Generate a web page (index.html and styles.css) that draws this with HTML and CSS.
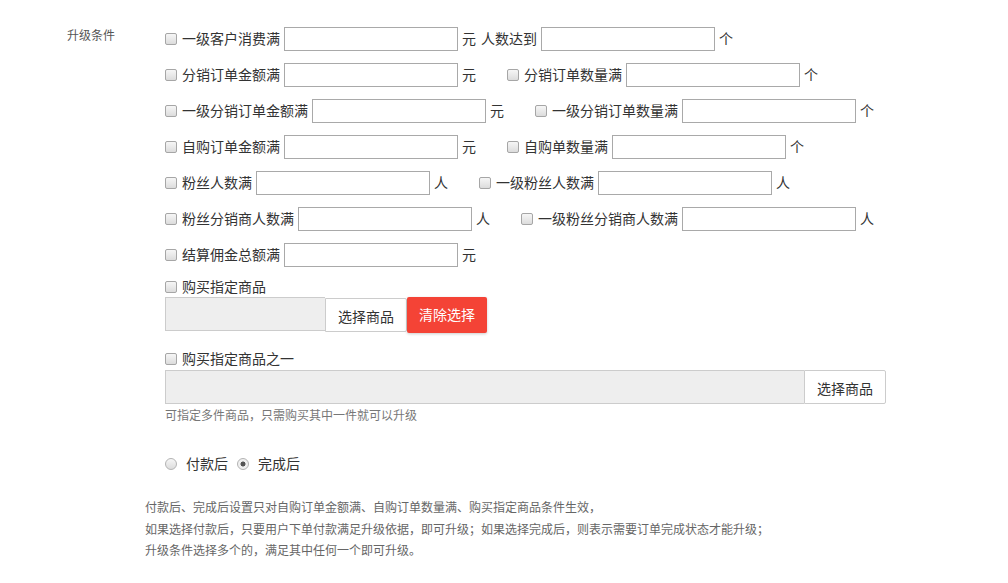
FILE: index.html
```html
<!DOCTYPE html>
<html lang="zh-CN">
<head>
<meta charset="utf-8">
<title>升级条件</title>
<link rel="stylesheet" href="styles.css">
</head>
<body>
<div class="page">
  <div class="group">
    <div class="group-label">升级条件</div>
    <div class="group-body">
      <div class="row">
        <label class="field tight"><input type="checkbox" class="cb"><span>一级客户消费满</span><input type="text" class="txt"><span>元</span></label>
        <span class="plain">人数达到</span><input type="text" class="txt"><span class="unit-last">个</span>
      </div>
      <div class="row">
        <label class="field"><input type="checkbox" class="cb"><span>分销订单金额满</span><input type="text" class="txt"><span>元</span></label>
        <label class="field"><input type="checkbox" class="cb"><span>分销订单数量满</span><input type="text" class="txt"><span>个</span></label>
      </div>
      <div class="row">
        <label class="field"><input type="checkbox" class="cb"><span>一级分销订单金额满</span><input type="text" class="txt"><span>元</span></label>
        <label class="field"><input type="checkbox" class="cb"><span>一级分销订单数量满</span><input type="text" class="txt"><span>个</span></label>
      </div>
      <div class="row">
        <label class="field"><input type="checkbox" class="cb"><span>自购订单金额满</span><input type="text" class="txt"><span>元</span></label>
        <label class="field"><input type="checkbox" class="cb"><span>自购单数量满</span><input type="text" class="txt"><span>个</span></label>
      </div>
      <div class="row">
        <label class="field"><input type="checkbox" class="cb"><span>粉丝人数满</span><input type="text" class="txt"><span>人</span></label>
        <label class="field"><input type="checkbox" class="cb"><span>一级粉丝人数满</span><input type="text" class="txt"><span>人</span></label>
      </div>
      <div class="row">
        <label class="field"><input type="checkbox" class="cb"><span>粉丝分销商人数满</span><input type="text" class="txt"><span>人</span></label>
        <label class="field"><input type="checkbox" class="cb"><span>一级粉丝分销商人数满</span><input type="text" class="txt"><span>人</span></label>
      </div>
      <div class="row">
        <label class="field"><input type="checkbox" class="cb"><span>结算佣金总额满</span><input type="text" class="txt"><span>元</span></label>
      </div>

      <label class="check-row"><input type="checkbox" class="cb"><span>购买指定商品</span></label>
      <div class="pick">
        <div class="pick-box short"></div>
        <button class="btn-white">选择商品</button>
        <button class="btn-red">清除选择</button>
      </div>

      <label class="check-row second"><input type="checkbox" class="cb"><span>购买指定商品之一</span></label>
      <div class="pick wide">
        <div class="pick-box long"></div>
        <button class="btn-white tall">选择商品</button>
      </div>
      <div class="hint">可指定多件商品，只需购买其中一件就可以升级</div>

      <div class="radio-row">
        <label class="radio-item"><input type="radio" name="when" class="rd"><span>付款后</span></label>
        <label class="radio-item"><input type="radio" name="when" class="rd" checked><span>完成后</span></label>
      </div>
    </div>
  </div>
  <div class="notes">
    <p>付款后、完成后设置只对自购订单金额满、自购订单数量满、购买指定商品条件生效，</p>
    <p>如果选择付款后，只要用户下单付款满足升级依据，即可升级；如果选择完成后，则表示需要订单完成状态才能升级；</p>
    <p>升级条件选择多个的，满足其中任何一个即可升级。</p>
  </div>
</div>
</body>
</html>
```
FILE: styles.css
```css
* { box-sizing: border-box; }
html, body { margin: 0; padding: 0; background: #fff; }
body {
  font-family: "Noto Sans CJK SC", "Microsoft YaHei", sans-serif;
  font-size: 14px;
  color: #333;
}
.page { padding-top: 21px; }
.group { display: flex; padding-left: 67px; }
.group-label {
  width: 98px;
  flex: none;
  font-size: 12px;
  line-height: 28px;
  color: #555;
}
.group-body { display: flex; flex-direction: column; flex: none; }
.row {
  display: flex;
  align-items: center;
  height: 36px;
  white-space: nowrap;
}
.row span, .check-row span, .radio-item span { padding-bottom: 2px; flex: none; }
.field {
  display: flex;
  align-items: center;
  gap: 4px;
  margin-right: 31px;
  flex: none;
}
.field.tight { margin-right: 5px; }
.field > .cb { margin-right: 1px; }
.plain { margin-right: 4px; }
.unit-last { margin-left: 4px; }
.txt {
  width: 174px;
  height: 24px;
  flex: none;
  border: 1px solid #a9a9a9;
  margin: 0;
  padding: 0 4px;
  background: #fff;
  font: inherit;
}
.cb {
  appearance: none;
  -webkit-appearance: none;
  width: 12px;
  height: 12px;
  margin: 0;
  border: 1px solid #a6a6a6;
  border-radius: 2px;
  background: linear-gradient(#f6f6f6, #dcdcdc);
  flex: none;
}
.check-row {
  display: flex;
  align-items: center;
  gap: 5px;
  height: 24px;
  padding-top: 4px;
}
.check-row.second { margin-top: 12px; }
.pick { display: flex; align-items: flex-start; }
.pick.wide { margin-top: 1px; }
.pick-box {
  background: #eee;
  border: 1px solid #ccc;
  border-right: none;
  height: 34px;
  flex: none;
}
.pick-box.short { width: 160px; }
.pick-box.long { width: 639px; }
.btn-white {
  width: 82px;
  height: 34px;
  flex: none;
  margin: 1px 0 0 0;
  padding: 2px 0 0 0;
  border: 1px solid #ccc;
  background: #fff;
  color: #333;
  font: inherit;
  border-radius: 0 2px 2px 0;
}
.btn-white.tall { margin-top: 0; }
.btn-red {
  width: 80px;
  height: 36px;
  flex: none;
  margin: 0;
  padding: 0 0 2px 0;
  border: none;
  border-radius: 2px;
  background: #f44336;
  color: #fff;
  font: inherit;
  box-shadow: 0 1px 3px rgba(0,0,0,0.2);
}
.hint {
  font-size: 12px;
  line-height: 20px;
  color: #777;
  margin-top: 1px;
}
.radio-row {
  display: flex;
  align-items: center;
  height: 24px;
  margin-top: 27px;
  gap: 9px;
}
.radio-item { display: flex; align-items: center; gap: 9px; }
.rd {
  appearance: none;
  -webkit-appearance: none;
  width: 12px;
  height: 12px;
  margin: 0;
  border: 1px solid #b3b3b3;
  border-radius: 50%;
  background: linear-gradient(#f6f6f6, #dcdcdc);
  flex: none;
}
.rd:checked {
  background: radial-gradient(circle, #555 0 2.2px, #f0f0f0 2.8px);
}
.notes {
  padding-left: 145px;
  margin-top: 20px;
  font-size: 12px;
  line-height: 21.5px;
  color: #666;
}
.notes p { margin: 0; }
```
